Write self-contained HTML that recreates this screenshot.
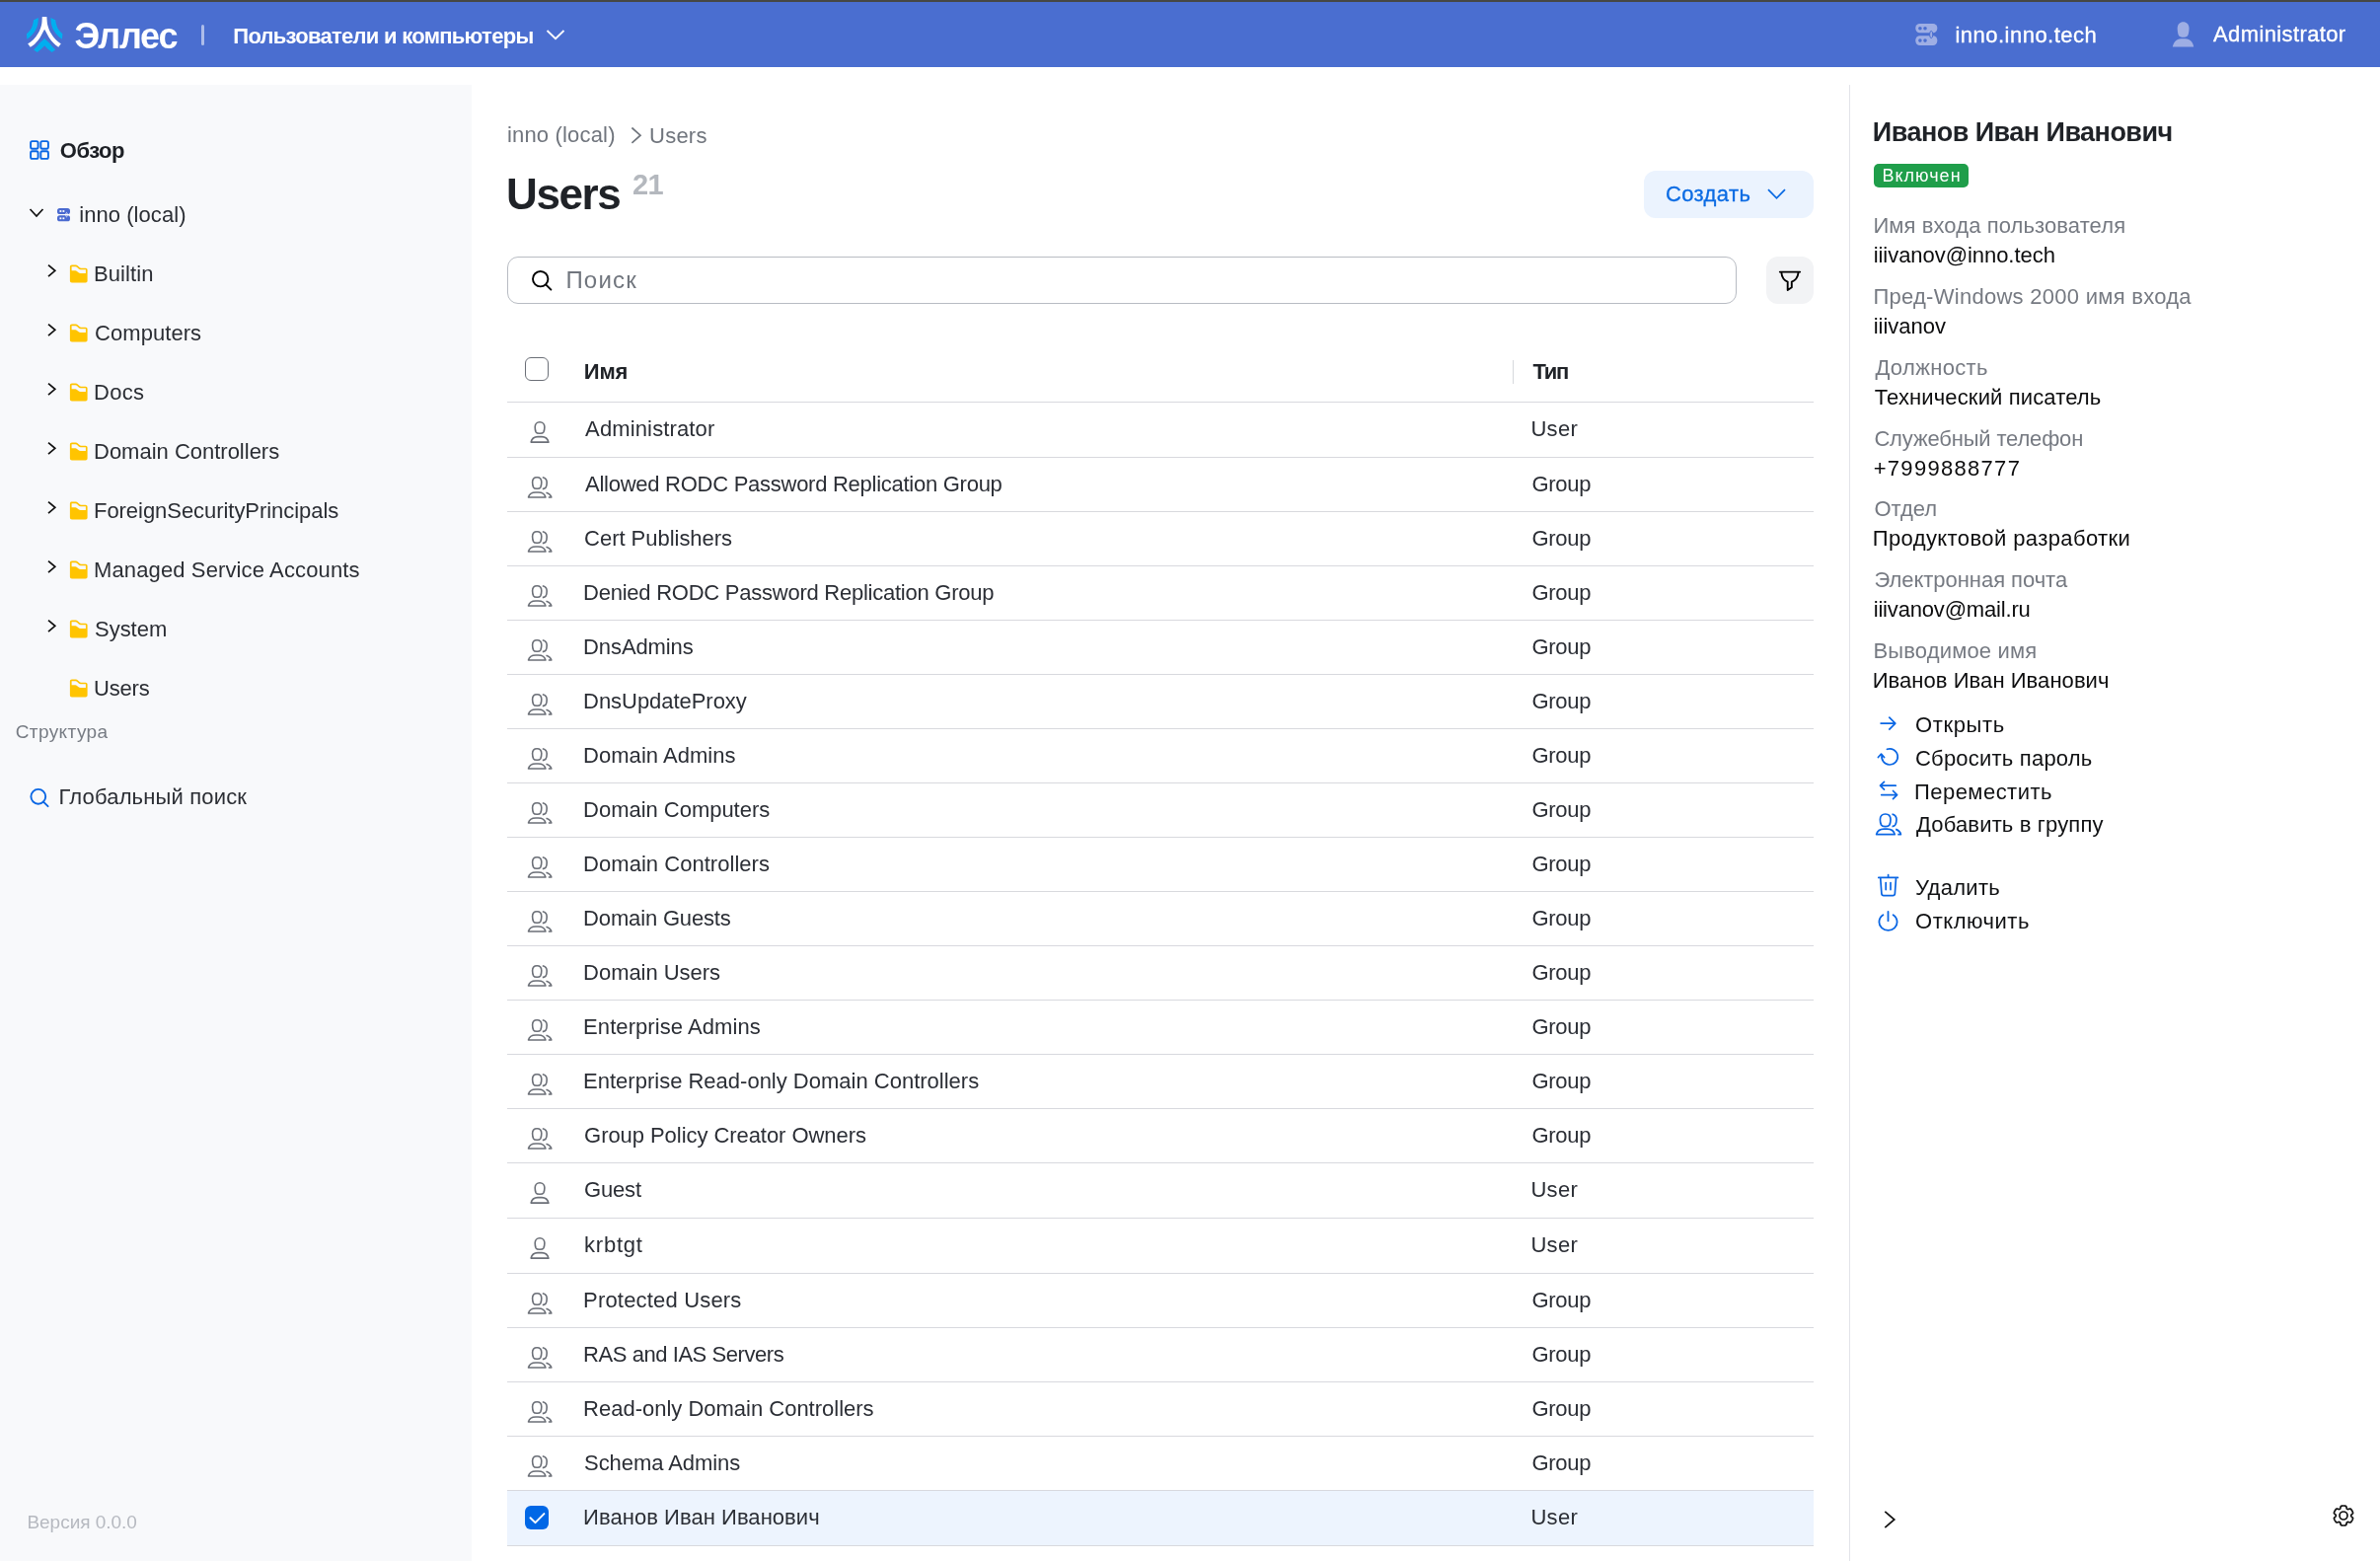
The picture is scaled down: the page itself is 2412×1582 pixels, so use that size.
<!DOCTYPE html>
<html><head><meta charset="utf-8"><style>
html,body{margin:0;padding:0;}
body{width:2412px;height:1582px;overflow:hidden;position:relative;background:#fff;font-family:"Liberation Sans", sans-serif;}
.t{position:absolute;white-space:pre;font-family:"Liberation Sans", sans-serif;}
svg{overflow:visible}
#w{position:absolute;left:0;top:0;width:2412px;height:1582px;will-change:transform;}
</style></head><body><div id="w">
<div style="position:absolute;left:0px;top:0px;width:2412px;height:2px;background:#464744"></div>
<div style="position:absolute;left:0px;top:2px;width:2412px;height:66px;background:#4a6ed0"></div>
<svg style="position:absolute;left:20px;top:10px" width="55" height="50" viewBox="0 0 55 50" fill="none">
<path d="M22.74 6.89 L27.39 6.89 C27.6 10 27.7 13 28.3 15.5 C29 18.5 30.5 22 32.03 24.34 C33.5 26.8 35 28.6 35.87 29.6 C37.5 31.5 39.5 33 41.8 34.27 L39.24 37.8 C37.2 36.5 35.5 35.2 34.1 33.6 C32.5 31.8 31 30 29.79 28.19 C28.3 25.8 27 23 25.14 19.86 C23.3 23 22 25.8 20.5 28.19 C19.3 30 17.8 31.8 16.2 33.6 C14.8 35.2 13.1 36.5 10.73 37.8 L8.17 34.27 C10.7 33 12.8 31.5 14.4 29.6 C15.3 28.6 16.8 26.8 18.25 24.34 C19.8 22 21.3 18.5 22 15.5 C22.6 13 22.6 10 22.74 6.89 Z" fill="#fff"/>
<path d="M14.09 10.25 L18.9 8.01 C18.8 10.5 18.7 12 18.42 13.45 C18 15.8 17.5 17.5 16.66 19.22 C15.6 21.4 14.4 23.3 12.81 24.98 C11.3 26.6 9.5 28.3 7.37 29.79 L6.89 24.34 C8.3 23.2 9.5 22 10.57 20.5 C11.6 19.2 12.3 17.7 12.81 16.02 C13.4 14.2 13.8 12.4 14.09 10.25 Z" fill="#00aeef"/>
<path d="M36.21 10.25 L31.4 8.01 C31.5 10.5 31.6 12 31.88 13.45 C32.3 15.8 32.8 17.5 33.64 19.22 C34.7 21.4 35.9 23.3 37.49 24.98 C39 26.6 40.8 28.3 42.93 29.79 L43.41 24.34 C42 23.2 40.8 22 39.73 20.5 C38.7 19.2 38 17.7 37.49 16.02 C36.9 14.2 36.5 12.4 36.21 10.25 Z" fill="#00aeef"/>
<path d="M25.14 28.83 C23.8 30.6 22.5 31.9 20.82 32.99 C18.8 35.4 16.6 38 14.09 40.52 L17.78 42.92 C19.2 41.8 20.5 40.8 21.78 39.72 C23 38.6 24.1 37.4 25.14 36.19 C26.2 37.4 27.3 38.6 28.51 39.72 C29.8 40.8 31.1 41.8 32.51 42.92 L36.19 40.52 C33.7 38 31.5 35.4 29.47 32.99 C27.8 31.9 26.5 30.6 25.14 28.83 Z" fill="#00aeef"/>
</svg>
<div class="t" style="left:75.60px;top:19px;font-size:36px;line-height:36px;color:#fff;font-weight:700;letter-spacing:-1.150px;">Эллес</div>
<div style="position:absolute;left:204px;top:24.5px;width:3px;height:21px;background:rgba(255,255,255,0.55);border-radius:1.5px"></div>
<div class="t" style="left:236.30px;top:26px;font-size:22px;line-height:22px;color:#fff;font-weight:700;letter-spacing:-0.721px;">Пользователи и компьютеры</div>
<svg style="position:absolute;left:552px;top:28px" width="22" height="14" viewBox="0 0 22 14" fill="none"><path d="M2.5 3 L11 11.2 L19.5 3" stroke="#fff" stroke-width="1.8" fill="none"/></svg>
<svg style="position:absolute;left:1940px;top:22px" width="26" height="26" viewBox="0 0 26 26" fill="none"><rect x="1.3" y="1.9" width="22" height="9.4" rx="4.2" fill="#9eaee4"/>
<rect x="1.3" y="14.3" width="22" height="9.6" rx="4.3" fill="#9eaee4"/>
<circle cx="5.9" cy="6.7" r="1.8" fill="#4a6ed0"/><circle cx="11" cy="6.7" r="1.8" fill="#4a6ed0"/>
<circle cx="5.9" cy="19.1" r="1.8" fill="#4a6ed0"/><circle cx="11" cy="19.1" r="1.8" fill="#4a6ed0"/>
<ellipse cx="17.2" cy="13" rx="1.6" ry="3.6" fill="#9eaee4" stroke="#4a6ed0" stroke-width="1"/></svg>
<div class="t" style="left:1981.40px;top:25px;font-size:22px;line-height:22px;color:#fff;letter-spacing:0.492px;-webkit-text-stroke:0.35px #fff;">inno.inno.tech</div>
<svg style="position:absolute;left:2200px;top:20px" width="26" height="30" viewBox="0 0 26 30" fill="none"><path d="M12.6 2.2 C16 2.2 18.5 4.5 18.5 8.5 C18.5 11 18.1 14 17.3 15.8 C16.5 17.4 14.8 17.8 12.6 17.8 C10.4 17.8 8.7 17.4 7.9 15.8 C7.1 14 6.7 11 6.7 8.5 C6.7 4.5 9.2 2.2 12.6 2.2 Z" fill="#9eaee4"/>
<path d="M1.8 27.6 C2.6 23 5.5 19.2 10.5 19.2 L14.7 19.2 C19.7 19.2 22.6 23 23.2 27.6 Z" fill="#9eaee4"/></svg>
<div class="t" style="left:2243.00px;top:24px;font-size:22px;line-height:22px;color:#fff;letter-spacing:0.383px;-webkit-text-stroke:0.35px #fff;">Administrator</div>
<div style="position:absolute;left:0px;top:86px;width:478px;height:1496px;background:#f8f9fb"></div>
<svg style="position:absolute;left:28px;top:140px" width="24" height="24" viewBox="0 0 24 24" fill="none"><g stroke="#0a66e4" stroke-width="1.9" fill="none">
<rect x="3.1" y="3.1" width="7.5" height="7.6" rx="1.6"/><rect x="13.3" y="3.1" width="7.6" height="7.6" rx="1.6"/>
<rect x="3.1" y="13.3" width="7.5" height="7.6" rx="1.6"/><rect x="13.3" y="13.3" width="7.6" height="7.6" rx="1.6"/></g></svg>
<div class="t" style="left:60.80px;top:142px;font-size:22px;line-height:22px;color:#1d2025;font-weight:700;letter-spacing:-0.525px;">Обзор</div>
<svg style="position:absolute;left:28px;top:208px" width="18" height="16" viewBox="0 0 18 16" fill="none"><path d="M2.5 4 L9 11 L15.5 4" stroke="#111" stroke-width="1.7" fill="none"/></svg>
<svg style="position:absolute;left:56px;top:209px" width="18" height="18" viewBox="0 0 18 18" fill="none"><rect x="2" y="2" width="13" height="6" rx="2.6" fill="#4a6ad0"/><rect x="2" y="9.3" width="13" height="6" rx="2.6" fill="#4a6ad0"/>
<rect x="4.5" y="4.1" width="1.8" height="1.8" fill="#fff"/><rect x="7.5" y="4.1" width="1.8" height="1.8" fill="#fff"/>
<rect x="4.5" y="11.4" width="1.8" height="1.8" fill="#fff"/><rect x="7.5" y="11.4" width="1.8" height="1.8" fill="#fff"/>
<ellipse cx="11.5" cy="8.6" rx="0.8" ry="2.2" fill="none" stroke="#fff" stroke-width="0.7"/></svg>
<div class="t" style="left:80.20px;top:207px;font-size:22px;line-height:22px;color:#2b2e34;letter-spacing:0.064px;">inno (local)</div>
<svg style="position:absolute;left:46px;top:266px" width="14" height="18" viewBox="0 0 14 18" fill="none"><path d="M3 2.6 L9.8 8.3 L3 14.2" stroke="#111" stroke-width="1.7" fill="none"/></svg>
<svg style="position:absolute;left:70px;top:268px" width="20" height="19" viewBox="0 0 20 19" fill="none"><path d="M0.9 2.6 C0.9 1.3 1.6 0.6 2.9 0.6 L6.8 0.6 C7.7 0.6 8.3 0.9 8.9 1.5 L10.6 3.1 C11 3.5 11.5 3.7 12.2 3.7 L16.6 3.7 C17.9 3.7 18.6 4.4 18.6 5.7 L18.6 16.4 C18.6 17.7 17.9 18.4 16.6 18.4 L2.9 18.4 C1.6 18.4 0.9 17.7 0.9 16.4 Z" fill="#ffc400"/>
<path d="M2.6 2.3 L6.6 2.3 C7.3 2.3 7.7 2.5 8.2 3 L9.8 4.5 C10.3 5 10.9 5.3 11.8 5.3 L16.9 5.3 L16.9 9.1 L11.6 9.1 C10.8 9.1 10.2 8.8 9.6 8.3 L8 6.9 C7.5 6.4 7 6.2 6.3 6.2 L2.6 6.2 Z" fill="#f8f9fb"/></svg>
<div class="t" style="left:95.00px;top:267px;font-size:22px;line-height:22px;color:#2b2e34;letter-spacing:0.100px;">Builtin</div>
<svg style="position:absolute;left:46px;top:326px" width="14" height="18" viewBox="0 0 14 18" fill="none"><path d="M3 2.6 L9.8 8.3 L3 14.2" stroke="#111" stroke-width="1.7" fill="none"/></svg>
<svg style="position:absolute;left:70px;top:328px" width="20" height="19" viewBox="0 0 20 19" fill="none"><path d="M0.9 2.6 C0.9 1.3 1.6 0.6 2.9 0.6 L6.8 0.6 C7.7 0.6 8.3 0.9 8.9 1.5 L10.6 3.1 C11 3.5 11.5 3.7 12.2 3.7 L16.6 3.7 C17.9 3.7 18.6 4.4 18.6 5.7 L18.6 16.4 C18.6 17.7 17.9 18.4 16.6 18.4 L2.9 18.4 C1.6 18.4 0.9 17.7 0.9 16.4 Z" fill="#ffc400"/>
<path d="M2.6 2.3 L6.6 2.3 C7.3 2.3 7.7 2.5 8.2 3 L9.8 4.5 C10.3 5 10.9 5.3 11.8 5.3 L16.9 5.3 L16.9 9.1 L11.6 9.1 C10.8 9.1 10.2 8.8 9.6 8.3 L8 6.9 C7.5 6.4 7 6.2 6.3 6.2 L2.6 6.2 Z" fill="#f8f9fb"/></svg>
<div class="t" style="left:96.00px;top:327px;font-size:22px;line-height:22px;color:#2b2e34;letter-spacing:0.062px;">Computers</div>
<svg style="position:absolute;left:46px;top:386px" width="14" height="18" viewBox="0 0 14 18" fill="none"><path d="M3 2.6 L9.8 8.3 L3 14.2" stroke="#111" stroke-width="1.7" fill="none"/></svg>
<svg style="position:absolute;left:70px;top:388px" width="20" height="19" viewBox="0 0 20 19" fill="none"><path d="M0.9 2.6 C0.9 1.3 1.6 0.6 2.9 0.6 L6.8 0.6 C7.7 0.6 8.3 0.9 8.9 1.5 L10.6 3.1 C11 3.5 11.5 3.7 12.2 3.7 L16.6 3.7 C17.9 3.7 18.6 4.4 18.6 5.7 L18.6 16.4 C18.6 17.7 17.9 18.4 16.6 18.4 L2.9 18.4 C1.6 18.4 0.9 17.7 0.9 16.4 Z" fill="#ffc400"/>
<path d="M2.6 2.3 L6.6 2.3 C7.3 2.3 7.7 2.5 8.2 3 L9.8 4.5 C10.3 5 10.9 5.3 11.8 5.3 L16.9 5.3 L16.9 9.1 L11.6 9.1 C10.8 9.1 10.2 8.8 9.6 8.3 L8 6.9 C7.5 6.4 7 6.2 6.3 6.2 L2.6 6.2 Z" fill="#f8f9fb"/></svg>
<div class="t" style="left:95.00px;top:387px;font-size:22px;line-height:22px;color:#2b2e34;letter-spacing:0.300px;">Docs</div>
<svg style="position:absolute;left:46px;top:446px" width="14" height="18" viewBox="0 0 14 18" fill="none"><path d="M3 2.6 L9.8 8.3 L3 14.2" stroke="#111" stroke-width="1.7" fill="none"/></svg>
<svg style="position:absolute;left:70px;top:448px" width="20" height="19" viewBox="0 0 20 19" fill="none"><path d="M0.9 2.6 C0.9 1.3 1.6 0.6 2.9 0.6 L6.8 0.6 C7.7 0.6 8.3 0.9 8.9 1.5 L10.6 3.1 C11 3.5 11.5 3.7 12.2 3.7 L16.6 3.7 C17.9 3.7 18.6 4.4 18.6 5.7 L18.6 16.4 C18.6 17.7 17.9 18.4 16.6 18.4 L2.9 18.4 C1.6 18.4 0.9 17.7 0.9 16.4 Z" fill="#ffc400"/>
<path d="M2.6 2.3 L6.6 2.3 C7.3 2.3 7.7 2.5 8.2 3 L9.8 4.5 C10.3 5 10.9 5.3 11.8 5.3 L16.9 5.3 L16.9 9.1 L11.6 9.1 C10.8 9.1 10.2 8.8 9.6 8.3 L8 6.9 C7.5 6.4 7 6.2 6.3 6.2 L2.6 6.2 Z" fill="#f8f9fb"/></svg>
<div class="t" style="left:95.00px;top:447px;font-size:22px;line-height:22px;color:#2b2e34;letter-spacing:-0.006px;">Domain Controllers</div>
<svg style="position:absolute;left:46px;top:506px" width="14" height="18" viewBox="0 0 14 18" fill="none"><path d="M3 2.6 L9.8 8.3 L3 14.2" stroke="#111" stroke-width="1.7" fill="none"/></svg>
<svg style="position:absolute;left:70px;top:508px" width="20" height="19" viewBox="0 0 20 19" fill="none"><path d="M0.9 2.6 C0.9 1.3 1.6 0.6 2.9 0.6 L6.8 0.6 C7.7 0.6 8.3 0.9 8.9 1.5 L10.6 3.1 C11 3.5 11.5 3.7 12.2 3.7 L16.6 3.7 C17.9 3.7 18.6 4.4 18.6 5.7 L18.6 16.4 C18.6 17.7 17.9 18.4 16.6 18.4 L2.9 18.4 C1.6 18.4 0.9 17.7 0.9 16.4 Z" fill="#ffc400"/>
<path d="M2.6 2.3 L6.6 2.3 C7.3 2.3 7.7 2.5 8.2 3 L9.8 4.5 C10.3 5 10.9 5.3 11.8 5.3 L16.9 5.3 L16.9 9.1 L11.6 9.1 C10.8 9.1 10.2 8.8 9.6 8.3 L8 6.9 C7.5 6.4 7 6.2 6.3 6.2 L2.6 6.2 Z" fill="#f8f9fb"/></svg>
<div class="t" style="left:95.00px;top:507px;font-size:22px;line-height:22px;color:#2b2e34;letter-spacing:-0.046px;">ForeignSecurityPrincipals</div>
<svg style="position:absolute;left:46px;top:566px" width="14" height="18" viewBox="0 0 14 18" fill="none"><path d="M3 2.6 L9.8 8.3 L3 14.2" stroke="#111" stroke-width="1.7" fill="none"/></svg>
<svg style="position:absolute;left:70px;top:568px" width="20" height="19" viewBox="0 0 20 19" fill="none"><path d="M0.9 2.6 C0.9 1.3 1.6 0.6 2.9 0.6 L6.8 0.6 C7.7 0.6 8.3 0.9 8.9 1.5 L10.6 3.1 C11 3.5 11.5 3.7 12.2 3.7 L16.6 3.7 C17.9 3.7 18.6 4.4 18.6 5.7 L18.6 16.4 C18.6 17.7 17.9 18.4 16.6 18.4 L2.9 18.4 C1.6 18.4 0.9 17.7 0.9 16.4 Z" fill="#ffc400"/>
<path d="M2.6 2.3 L6.6 2.3 C7.3 2.3 7.7 2.5 8.2 3 L9.8 4.5 C10.3 5 10.9 5.3 11.8 5.3 L16.9 5.3 L16.9 9.1 L11.6 9.1 C10.8 9.1 10.2 8.8 9.6 8.3 L8 6.9 C7.5 6.4 7 6.2 6.3 6.2 L2.6 6.2 Z" fill="#f8f9fb"/></svg>
<div class="t" style="left:95.00px;top:567px;font-size:22px;line-height:22px;color:#2b2e34;letter-spacing:0.126px;">Managed Service Accounts</div>
<svg style="position:absolute;left:46px;top:626px" width="14" height="18" viewBox="0 0 14 18" fill="none"><path d="M3 2.6 L9.8 8.3 L3 14.2" stroke="#111" stroke-width="1.7" fill="none"/></svg>
<svg style="position:absolute;left:70px;top:628px" width="20" height="19" viewBox="0 0 20 19" fill="none"><path d="M0.9 2.6 C0.9 1.3 1.6 0.6 2.9 0.6 L6.8 0.6 C7.7 0.6 8.3 0.9 8.9 1.5 L10.6 3.1 C11 3.5 11.5 3.7 12.2 3.7 L16.6 3.7 C17.9 3.7 18.6 4.4 18.6 5.7 L18.6 16.4 C18.6 17.7 17.9 18.4 16.6 18.4 L2.9 18.4 C1.6 18.4 0.9 17.7 0.9 16.4 Z" fill="#ffc400"/>
<path d="M2.6 2.3 L6.6 2.3 C7.3 2.3 7.7 2.5 8.2 3 L9.8 4.5 C10.3 5 10.9 5.3 11.8 5.3 L16.9 5.3 L16.9 9.1 L11.6 9.1 C10.8 9.1 10.2 8.8 9.6 8.3 L8 6.9 C7.5 6.4 7 6.2 6.3 6.2 L2.6 6.2 Z" fill="#f8f9fb"/></svg>
<div class="t" style="left:96.00px;top:627px;font-size:22px;line-height:22px;color:#2b2e34;letter-spacing:-0.020px;">System</div>
<svg style="position:absolute;left:70px;top:688px" width="20" height="19" viewBox="0 0 20 19" fill="none"><path d="M0.9 2.6 C0.9 1.3 1.6 0.6 2.9 0.6 L6.8 0.6 C7.7 0.6 8.3 0.9 8.9 1.5 L10.6 3.1 C11 3.5 11.5 3.7 12.2 3.7 L16.6 3.7 C17.9 3.7 18.6 4.4 18.6 5.7 L18.6 16.4 C18.6 17.7 17.9 18.4 16.6 18.4 L2.9 18.4 C1.6 18.4 0.9 17.7 0.9 16.4 Z" fill="#ffc400"/>
<path d="M2.6 2.3 L6.6 2.3 C7.3 2.3 7.7 2.5 8.2 3 L9.8 4.5 C10.3 5 10.9 5.3 11.8 5.3 L16.9 5.3 L16.9 9.1 L11.6 9.1 C10.8 9.1 10.2 8.8 9.6 8.3 L8 6.9 C7.5 6.4 7 6.2 6.3 6.2 L2.6 6.2 Z" fill="#f8f9fb"/></svg>
<div class="t" style="left:95.00px;top:687px;font-size:22px;line-height:22px;color:#2b2e34;letter-spacing:-0.200px;">Users</div>
<div class="t" style="left:15.70px;top:732px;font-size:19px;line-height:19px;color:#777c84;letter-spacing:0.412px;">Структура</div>
<svg style="position:absolute;left:28px;top:797px" width="24" height="24" viewBox="0 0 24 24" fill="none"><circle cx="10.8" cy="10.3" r="7.4" stroke="#0a66e4" stroke-width="1.9"/><path d="M16 15.6 L20.6 20.2" stroke="#0a66e4" stroke-width="1.9" stroke-linecap="round"/></svg>
<div class="t" style="left:59.50px;top:797px;font-size:22px;line-height:22px;color:#2b2e34;letter-spacing:0.160px;">Глобальный поиск</div>
<div class="t" style="left:27.40px;top:1533px;font-size:19px;line-height:19px;color:#b6b9c0;letter-spacing:-0.018px;">Версия 0.0.0</div>
<div class="t" style="left:513.90px;top:126px;font-size:22px;line-height:22px;color:#70757d;letter-spacing:0.182px;">inno (local)</div>
<svg style="position:absolute;left:636px;top:127px" width="18" height="20" viewBox="0 0 18 20" fill="none"><path d="M4.4 2.5 L13 10.2 L4.4 17.8" stroke="#70757d" stroke-width="1.7" fill="none"/></svg>
<div class="t" style="left:658.00px;top:127px;font-size:22px;line-height:22px;color:#70757d;letter-spacing:0.250px;">Users</div>
<div class="t" style="left:513.00px;top:175px;font-size:44px;line-height:44px;color:#1f2227;font-weight:700;letter-spacing:-1.375px;">Users</div>
<div class="t" style="left:641.00px;top:173px;font-size:29px;line-height:29px;color:#b4b8be;font-weight:700;letter-spacing:-0.600px;">21</div>
<div style="position:absolute;left:1666px;top:173px;width:172px;height:48px;background:#ebf3fe;border-radius:12px"></div>
<div class="t" style="left:1687.90px;top:186px;font-size:22px;line-height:22px;color:#0b6be3;letter-spacing:0.400px;-webkit-text-stroke:0.3px #0b6be3;">Создать</div>
<svg style="position:absolute;left:1788px;top:188px" width="24" height="18" viewBox="0 0 24 18" fill="none"><path d="M4 4.2 L12.5 12.8 L21 4.2" stroke="#0b6be3" stroke-width="1.8" fill="none"/></svg>
<div style="position:absolute;left:514px;top:260px;width:1246px;height:48px;box-sizing:border-box;border:1.5px solid #b8bcc3;border-radius:11px;background:#fff"></div>
<svg style="position:absolute;left:534px;top:270px" width="28" height="28" viewBox="0 0 28 28" fill="none"><circle cx="13.7" cy="12.7" r="7.7" stroke="#000" stroke-width="1.9"/><path d="M19.6 18.8 L24.4 23.6" stroke="#000" stroke-width="1.9" stroke-linecap="round"/></svg>
<div class="t" style="left:573.40px;top:272px;font-size:24px;line-height:24px;color:#71767e;letter-spacing:1.225px;">Поиск</div>
<div style="position:absolute;left:1790px;top:260px;width:48px;height:48px;background:#f2f3f5;border-radius:12px"></div>
<svg style="position:absolute;left:1800px;top:270px" width="28" height="28" viewBox="0 0 28 28" fill="none"><path d="M3.8 5.6 L24.2 5.6 M5.3 6 C5.8 11 8.3 14.3 11.7 15.6 L11.7 24 L15.8 21.2 L15.8 15.6 C19.4 14.3 22 11 22.6 6" stroke="#000" stroke-width="1.9" fill="none" stroke-linejoin="round" stroke-linecap="round"/></svg>
<div style="position:absolute;left:532px;top:362px;width:24px;height:24px;box-sizing:border-box;border:1.6px solid #6b6f77;border-radius:6px;background:#fff"></div>
<div class="t" style="left:591.80px;top:366px;font-size:22px;line-height:22px;color:#1f2227;font-weight:700;letter-spacing:-0.150px;">Имя</div>
<div style="position:absolute;left:1533px;top:365px;width:1px;height:24px;background:#d6d8dd"></div>
<div class="t" style="left:1553.40px;top:366px;font-size:22px;line-height:22px;color:#1f2227;font-weight:700;letter-spacing:-1.200px;">Тип</div>
<div style="position:absolute;left:514px;top:407px;width:1324px;height:1px;background:#d8d9de"></div>
<svg style="position:absolute;left:533px;top:424px" width="28" height="28" viewBox="0 0 28 28" fill="none"><g stroke="#6b6f77" stroke-width="1.6" fill="none" stroke-linejoin="round">
<path d="M14 3.7 C17 3.7 18.9 6 18.9 8.8 C18.9 10.6 18.5 12.5 17.9 13.8 C17.3 15 16 15.2 14 15.2 C12 15.2 10.7 15 10.1 13.8 C9.5 12.5 9.2 10.6 9.2 8.8 C9.2 6 11 3.7 14 3.7 Z"/>
<path d="M5.1 24.1 C5.8 21 8 18.6 12 18.6 L16 18.6 C20 18.6 22.2 21 22.9 24.1 Z"/></g></svg>
<div class="t" style="left:593.10px;top:424px;font-size:22px;line-height:22px;color:#2b2e35;letter-spacing:0.133px;">Administrator</div>
<div class="t" style="left:1551.40px;top:424px;font-size:22px;line-height:22px;color:#2b2e35;letter-spacing:0.300px;">User</div>
<div style="position:absolute;left:514px;top:463px;width:1324px;height:1px;background:#d8d9de"></div>
<svg style="position:absolute;left:533px;top:480px" width="28" height="28" viewBox="0 0 28 28" fill="none"><g stroke="#6b6f77" stroke-width="1.6" fill="none" stroke-linejoin="round">
<path d="M11.2 3.7 C14.2 3.7 15.8 6 15.8 8.8 C15.8 10.6 15.4 12.5 14.8 13.8 C14.2 15 13 15.2 11.2 15.2 C9.4 15.2 8.2 15 7.6 13.8 C7 12.5 6.6 10.6 6.6 8.8 C6.6 6 8.2 3.7 11.2 3.7 Z"/>
<path d="M16.8 3.8 C19.6 4.3 21.2 6.4 21.2 9 C21.2 11 20.8 12.8 20.2 14 C19.5 15 18.3 15.4 16.8 15.6"/>
<path d="M2.5 24 C3.2 21 5.5 19 10 19 L12.5 19 C17 19 19.2 21 19.9 24 Z"/>
<path d="M20.5 19.2 C23.5 20.3 25.4 22 25.8 24 L22.8 24"/></g></svg>
<div class="t" style="left:593.10px;top:480px;font-size:22px;line-height:22px;color:#2b2e35;letter-spacing:-0.266px;">Allowed RODC Password Replication Group</div>
<div class="t" style="left:1552.40px;top:480px;font-size:22px;line-height:22px;color:#2b2e35;letter-spacing:-0.275px;">Group</div>
<div style="position:absolute;left:514px;top:518px;width:1324px;height:1px;background:#d8d9de"></div>
<svg style="position:absolute;left:533px;top:535px" width="28" height="28" viewBox="0 0 28 28" fill="none"><g stroke="#6b6f77" stroke-width="1.6" fill="none" stroke-linejoin="round">
<path d="M11.2 3.7 C14.2 3.7 15.8 6 15.8 8.8 C15.8 10.6 15.4 12.5 14.8 13.8 C14.2 15 13 15.2 11.2 15.2 C9.4 15.2 8.2 15 7.6 13.8 C7 12.5 6.6 10.6 6.6 8.8 C6.6 6 8.2 3.7 11.2 3.7 Z"/>
<path d="M16.8 3.8 C19.6 4.3 21.2 6.4 21.2 9 C21.2 11 20.8 12.8 20.2 14 C19.5 15 18.3 15.4 16.8 15.6"/>
<path d="M2.5 24 C3.2 21 5.5 19 10 19 L12.5 19 C17 19 19.2 21 19.9 24 Z"/>
<path d="M20.5 19.2 C23.5 20.3 25.4 22 25.8 24 L22.8 24"/></g></svg>
<div class="t" style="left:592.10px;top:535px;font-size:22px;line-height:22px;color:#2b2e35;letter-spacing:-0.029px;">Cert Publishers</div>
<div class="t" style="left:1552.40px;top:535px;font-size:22px;line-height:22px;color:#2b2e35;letter-spacing:-0.275px;">Group</div>
<div style="position:absolute;left:514px;top:573px;width:1324px;height:1px;background:#d8d9de"></div>
<svg style="position:absolute;left:533px;top:590px" width="28" height="28" viewBox="0 0 28 28" fill="none"><g stroke="#6b6f77" stroke-width="1.6" fill="none" stroke-linejoin="round">
<path d="M11.2 3.7 C14.2 3.7 15.8 6 15.8 8.8 C15.8 10.6 15.4 12.5 14.8 13.8 C14.2 15 13 15.2 11.2 15.2 C9.4 15.2 8.2 15 7.6 13.8 C7 12.5 6.6 10.6 6.6 8.8 C6.6 6 8.2 3.7 11.2 3.7 Z"/>
<path d="M16.8 3.8 C19.6 4.3 21.2 6.4 21.2 9 C21.2 11 20.8 12.8 20.2 14 C19.5 15 18.3 15.4 16.8 15.6"/>
<path d="M2.5 24 C3.2 21 5.5 19 10 19 L12.5 19 C17 19 19.2 21 19.9 24 Z"/>
<path d="M20.5 19.2 C23.5 20.3 25.4 22 25.8 24 L22.8 24"/></g></svg>
<div class="t" style="left:591.10px;top:590px;font-size:22px;line-height:22px;color:#2b2e35;letter-spacing:-0.246px;">Denied RODC Password Replication Group</div>
<div class="t" style="left:1552.40px;top:590px;font-size:22px;line-height:22px;color:#2b2e35;letter-spacing:-0.275px;">Group</div>
<div style="position:absolute;left:514px;top:628px;width:1324px;height:1px;background:#d8d9de"></div>
<svg style="position:absolute;left:533px;top:645px" width="28" height="28" viewBox="0 0 28 28" fill="none"><g stroke="#6b6f77" stroke-width="1.6" fill="none" stroke-linejoin="round">
<path d="M11.2 3.7 C14.2 3.7 15.8 6 15.8 8.8 C15.8 10.6 15.4 12.5 14.8 13.8 C14.2 15 13 15.2 11.2 15.2 C9.4 15.2 8.2 15 7.6 13.8 C7 12.5 6.6 10.6 6.6 8.8 C6.6 6 8.2 3.7 11.2 3.7 Z"/>
<path d="M16.8 3.8 C19.6 4.3 21.2 6.4 21.2 9 C21.2 11 20.8 12.8 20.2 14 C19.5 15 18.3 15.4 16.8 15.6"/>
<path d="M2.5 24 C3.2 21 5.5 19 10 19 L12.5 19 C17 19 19.2 21 19.9 24 Z"/>
<path d="M20.5 19.2 C23.5 20.3 25.4 22 25.8 24 L22.8 24"/></g></svg>
<div class="t" style="left:591.10px;top:645px;font-size:22px;line-height:22px;color:#2b2e35;letter-spacing:-0.112px;">DnsAdmins</div>
<div class="t" style="left:1552.40px;top:645px;font-size:22px;line-height:22px;color:#2b2e35;letter-spacing:-0.275px;">Group</div>
<div style="position:absolute;left:514px;top:683px;width:1324px;height:1px;background:#d8d9de"></div>
<svg style="position:absolute;left:533px;top:700px" width="28" height="28" viewBox="0 0 28 28" fill="none"><g stroke="#6b6f77" stroke-width="1.6" fill="none" stroke-linejoin="round">
<path d="M11.2 3.7 C14.2 3.7 15.8 6 15.8 8.8 C15.8 10.6 15.4 12.5 14.8 13.8 C14.2 15 13 15.2 11.2 15.2 C9.4 15.2 8.2 15 7.6 13.8 C7 12.5 6.6 10.6 6.6 8.8 C6.6 6 8.2 3.7 11.2 3.7 Z"/>
<path d="M16.8 3.8 C19.6 4.3 21.2 6.4 21.2 9 C21.2 11 20.8 12.8 20.2 14 C19.5 15 18.3 15.4 16.8 15.6"/>
<path d="M2.5 24 C3.2 21 5.5 19 10 19 L12.5 19 C17 19 19.2 21 19.9 24 Z"/>
<path d="M20.5 19.2 C23.5 20.3 25.4 22 25.8 24 L22.8 24"/></g></svg>
<div class="t" style="left:591.10px;top:700px;font-size:22px;line-height:22px;color:#2b2e35;letter-spacing:-0.046px;">DnsUpdateProxy</div>
<div class="t" style="left:1552.40px;top:700px;font-size:22px;line-height:22px;color:#2b2e35;letter-spacing:-0.275px;">Group</div>
<div style="position:absolute;left:514px;top:738px;width:1324px;height:1px;background:#d8d9de"></div>
<svg style="position:absolute;left:533px;top:755px" width="28" height="28" viewBox="0 0 28 28" fill="none"><g stroke="#6b6f77" stroke-width="1.6" fill="none" stroke-linejoin="round">
<path d="M11.2 3.7 C14.2 3.7 15.8 6 15.8 8.8 C15.8 10.6 15.4 12.5 14.8 13.8 C14.2 15 13 15.2 11.2 15.2 C9.4 15.2 8.2 15 7.6 13.8 C7 12.5 6.6 10.6 6.6 8.8 C6.6 6 8.2 3.7 11.2 3.7 Z"/>
<path d="M16.8 3.8 C19.6 4.3 21.2 6.4 21.2 9 C21.2 11 20.8 12.8 20.2 14 C19.5 15 18.3 15.4 16.8 15.6"/>
<path d="M2.5 24 C3.2 21 5.5 19 10 19 L12.5 19 C17 19 19.2 21 19.9 24 Z"/>
<path d="M20.5 19.2 C23.5 20.3 25.4 22 25.8 24 L22.8 24"/></g></svg>
<div class="t" style="left:591.10px;top:755px;font-size:22px;line-height:22px;color:#2b2e35;letter-spacing:0.025px;">Domain Admins</div>
<div class="t" style="left:1552.40px;top:755px;font-size:22px;line-height:22px;color:#2b2e35;letter-spacing:-0.275px;">Group</div>
<div style="position:absolute;left:514px;top:793px;width:1324px;height:1px;background:#d8d9de"></div>
<svg style="position:absolute;left:533px;top:810px" width="28" height="28" viewBox="0 0 28 28" fill="none"><g stroke="#6b6f77" stroke-width="1.6" fill="none" stroke-linejoin="round">
<path d="M11.2 3.7 C14.2 3.7 15.8 6 15.8 8.8 C15.8 10.6 15.4 12.5 14.8 13.8 C14.2 15 13 15.2 11.2 15.2 C9.4 15.2 8.2 15 7.6 13.8 C7 12.5 6.6 10.6 6.6 8.8 C6.6 6 8.2 3.7 11.2 3.7 Z"/>
<path d="M16.8 3.8 C19.6 4.3 21.2 6.4 21.2 9 C21.2 11 20.8 12.8 20.2 14 C19.5 15 18.3 15.4 16.8 15.6"/>
<path d="M2.5 24 C3.2 21 5.5 19 10 19 L12.5 19 C17 19 19.2 21 19.9 24 Z"/>
<path d="M20.5 19.2 C23.5 20.3 25.4 22 25.8 24 L22.8 24"/></g></svg>
<div class="t" style="left:591.10px;top:810px;font-size:22px;line-height:22px;color:#2b2e35;letter-spacing:-0.027px;">Domain Computers</div>
<div class="t" style="left:1552.40px;top:810px;font-size:22px;line-height:22px;color:#2b2e35;letter-spacing:-0.275px;">Group</div>
<div style="position:absolute;left:514px;top:848px;width:1324px;height:1px;background:#d8d9de"></div>
<svg style="position:absolute;left:533px;top:865px" width="28" height="28" viewBox="0 0 28 28" fill="none"><g stroke="#6b6f77" stroke-width="1.6" fill="none" stroke-linejoin="round">
<path d="M11.2 3.7 C14.2 3.7 15.8 6 15.8 8.8 C15.8 10.6 15.4 12.5 14.8 13.8 C14.2 15 13 15.2 11.2 15.2 C9.4 15.2 8.2 15 7.6 13.8 C7 12.5 6.6 10.6 6.6 8.8 C6.6 6 8.2 3.7 11.2 3.7 Z"/>
<path d="M16.8 3.8 C19.6 4.3 21.2 6.4 21.2 9 C21.2 11 20.8 12.8 20.2 14 C19.5 15 18.3 15.4 16.8 15.6"/>
<path d="M2.5 24 C3.2 21 5.5 19 10 19 L12.5 19 C17 19 19.2 21 19.9 24 Z"/>
<path d="M20.5 19.2 C23.5 20.3 25.4 22 25.8 24 L22.8 24"/></g></svg>
<div class="t" style="left:591.10px;top:865px;font-size:22px;line-height:22px;color:#2b2e35;letter-spacing:0.035px;">Domain Controllers</div>
<div class="t" style="left:1552.40px;top:865px;font-size:22px;line-height:22px;color:#2b2e35;letter-spacing:-0.275px;">Group</div>
<div style="position:absolute;left:514px;top:903px;width:1324px;height:1px;background:#d8d9de"></div>
<svg style="position:absolute;left:533px;top:920px" width="28" height="28" viewBox="0 0 28 28" fill="none"><g stroke="#6b6f77" stroke-width="1.6" fill="none" stroke-linejoin="round">
<path d="M11.2 3.7 C14.2 3.7 15.8 6 15.8 8.8 C15.8 10.6 15.4 12.5 14.8 13.8 C14.2 15 13 15.2 11.2 15.2 C9.4 15.2 8.2 15 7.6 13.8 C7 12.5 6.6 10.6 6.6 8.8 C6.6 6 8.2 3.7 11.2 3.7 Z"/>
<path d="M16.8 3.8 C19.6 4.3 21.2 6.4 21.2 9 C21.2 11 20.8 12.8 20.2 14 C19.5 15 18.3 15.4 16.8 15.6"/>
<path d="M2.5 24 C3.2 21 5.5 19 10 19 L12.5 19 C17 19 19.2 21 19.9 24 Z"/>
<path d="M20.5 19.2 C23.5 20.3 25.4 22 25.8 24 L22.8 24"/></g></svg>
<div class="t" style="left:591.10px;top:920px;font-size:22px;line-height:22px;color:#2b2e35;letter-spacing:-0.158px;">Domain Guests</div>
<div class="t" style="left:1552.40px;top:920px;font-size:22px;line-height:22px;color:#2b2e35;letter-spacing:-0.275px;">Group</div>
<div style="position:absolute;left:514px;top:958px;width:1324px;height:1px;background:#d8d9de"></div>
<svg style="position:absolute;left:533px;top:975px" width="28" height="28" viewBox="0 0 28 28" fill="none"><g stroke="#6b6f77" stroke-width="1.6" fill="none" stroke-linejoin="round">
<path d="M11.2 3.7 C14.2 3.7 15.8 6 15.8 8.8 C15.8 10.6 15.4 12.5 14.8 13.8 C14.2 15 13 15.2 11.2 15.2 C9.4 15.2 8.2 15 7.6 13.8 C7 12.5 6.6 10.6 6.6 8.8 C6.6 6 8.2 3.7 11.2 3.7 Z"/>
<path d="M16.8 3.8 C19.6 4.3 21.2 6.4 21.2 9 C21.2 11 20.8 12.8 20.2 14 C19.5 15 18.3 15.4 16.8 15.6"/>
<path d="M2.5 24 C3.2 21 5.5 19 10 19 L12.5 19 C17 19 19.2 21 19.9 24 Z"/>
<path d="M20.5 19.2 C23.5 20.3 25.4 22 25.8 24 L22.8 24"/></g></svg>
<div class="t" style="left:591.10px;top:975px;font-size:22px;line-height:22px;color:#2b2e35;letter-spacing:-0.045px;">Domain Users</div>
<div class="t" style="left:1552.40px;top:975px;font-size:22px;line-height:22px;color:#2b2e35;letter-spacing:-0.275px;">Group</div>
<div style="position:absolute;left:514px;top:1013px;width:1324px;height:1px;background:#d8d9de"></div>
<svg style="position:absolute;left:533px;top:1030px" width="28" height="28" viewBox="0 0 28 28" fill="none"><g stroke="#6b6f77" stroke-width="1.6" fill="none" stroke-linejoin="round">
<path d="M11.2 3.7 C14.2 3.7 15.8 6 15.8 8.8 C15.8 10.6 15.4 12.5 14.8 13.8 C14.2 15 13 15.2 11.2 15.2 C9.4 15.2 8.2 15 7.6 13.8 C7 12.5 6.6 10.6 6.6 8.8 C6.6 6 8.2 3.7 11.2 3.7 Z"/>
<path d="M16.8 3.8 C19.6 4.3 21.2 6.4 21.2 9 C21.2 11 20.8 12.8 20.2 14 C19.5 15 18.3 15.4 16.8 15.6"/>
<path d="M2.5 24 C3.2 21 5.5 19 10 19 L12.5 19 C17 19 19.2 21 19.9 24 Z"/>
<path d="M20.5 19.2 C23.5 20.3 25.4 22 25.8 24 L22.8 24"/></g></svg>
<div class="t" style="left:591.10px;top:1030px;font-size:22px;line-height:22px;color:#2b2e35;letter-spacing:0.069px;">Enterprise Admins</div>
<div class="t" style="left:1552.40px;top:1030px;font-size:22px;line-height:22px;color:#2b2e35;letter-spacing:-0.275px;">Group</div>
<div style="position:absolute;left:514px;top:1068px;width:1324px;height:1px;background:#d8d9de"></div>
<svg style="position:absolute;left:533px;top:1085px" width="28" height="28" viewBox="0 0 28 28" fill="none"><g stroke="#6b6f77" stroke-width="1.6" fill="none" stroke-linejoin="round">
<path d="M11.2 3.7 C14.2 3.7 15.8 6 15.8 8.8 C15.8 10.6 15.4 12.5 14.8 13.8 C14.2 15 13 15.2 11.2 15.2 C9.4 15.2 8.2 15 7.6 13.8 C7 12.5 6.6 10.6 6.6 8.8 C6.6 6 8.2 3.7 11.2 3.7 Z"/>
<path d="M16.8 3.8 C19.6 4.3 21.2 6.4 21.2 9 C21.2 11 20.8 12.8 20.2 14 C19.5 15 18.3 15.4 16.8 15.6"/>
<path d="M2.5 24 C3.2 21 5.5 19 10 19 L12.5 19 C17 19 19.2 21 19.9 24 Z"/>
<path d="M20.5 19.2 C23.5 20.3 25.4 22 25.8 24 L22.8 24"/></g></svg>
<div class="t" style="left:591.10px;top:1085px;font-size:22px;line-height:22px;color:#2b2e35;">Enterprise Read-only Domain Controllers</div>
<div class="t" style="left:1552.40px;top:1085px;font-size:22px;line-height:22px;color:#2b2e35;letter-spacing:-0.275px;">Group</div>
<div style="position:absolute;left:514px;top:1123px;width:1324px;height:1px;background:#d8d9de"></div>
<svg style="position:absolute;left:533px;top:1140px" width="28" height="28" viewBox="0 0 28 28" fill="none"><g stroke="#6b6f77" stroke-width="1.6" fill="none" stroke-linejoin="round">
<path d="M11.2 3.7 C14.2 3.7 15.8 6 15.8 8.8 C15.8 10.6 15.4 12.5 14.8 13.8 C14.2 15 13 15.2 11.2 15.2 C9.4 15.2 8.2 15 7.6 13.8 C7 12.5 6.6 10.6 6.6 8.8 C6.6 6 8.2 3.7 11.2 3.7 Z"/>
<path d="M16.8 3.8 C19.6 4.3 21.2 6.4 21.2 9 C21.2 11 20.8 12.8 20.2 14 C19.5 15 18.3 15.4 16.8 15.6"/>
<path d="M2.5 24 C3.2 21 5.5 19 10 19 L12.5 19 C17 19 19.2 21 19.9 24 Z"/>
<path d="M20.5 19.2 C23.5 20.3 25.4 22 25.8 24 L22.8 24"/></g></svg>
<div class="t" style="left:592.10px;top:1140px;font-size:22px;line-height:22px;color:#2b2e35;letter-spacing:-0.058px;">Group Policy Creator Owners</div>
<div class="t" style="left:1552.40px;top:1140px;font-size:22px;line-height:22px;color:#2b2e35;letter-spacing:-0.275px;">Group</div>
<div style="position:absolute;left:514px;top:1178px;width:1324px;height:1px;background:#d8d9de"></div>
<svg style="position:absolute;left:533px;top:1195px" width="28" height="28" viewBox="0 0 28 28" fill="none"><g stroke="#6b6f77" stroke-width="1.6" fill="none" stroke-linejoin="round">
<path d="M14 3.7 C17 3.7 18.9 6 18.9 8.8 C18.9 10.6 18.5 12.5 17.9 13.8 C17.3 15 16 15.2 14 15.2 C12 15.2 10.7 15 10.1 13.8 C9.5 12.5 9.2 10.6 9.2 8.8 C9.2 6 11 3.7 14 3.7 Z"/>
<path d="M5.1 24.1 C5.8 21 8 18.6 12 18.6 L16 18.6 C20 18.6 22.2 21 22.9 24.1 Z"/></g></svg>
<div class="t" style="left:592.10px;top:1195px;font-size:22px;line-height:22px;color:#2b2e35;letter-spacing:-0.200px;">Guest</div>
<div class="t" style="left:1551.40px;top:1195px;font-size:22px;line-height:22px;color:#2b2e35;letter-spacing:0.300px;">User</div>
<div style="position:absolute;left:514px;top:1234px;width:1324px;height:1px;background:#d8d9de"></div>
<svg style="position:absolute;left:533px;top:1251px" width="28" height="28" viewBox="0 0 28 28" fill="none"><g stroke="#6b6f77" stroke-width="1.6" fill="none" stroke-linejoin="round">
<path d="M14 3.7 C17 3.7 18.9 6 18.9 8.8 C18.9 10.6 18.5 12.5 17.9 13.8 C17.3 15 16 15.2 14 15.2 C12 15.2 10.7 15 10.1 13.8 C9.5 12.5 9.2 10.6 9.2 8.8 C9.2 6 11 3.7 14 3.7 Z"/>
<path d="M5.1 24.1 C5.8 21 8 18.6 12 18.6 L16 18.6 C20 18.6 22.2 21 22.9 24.1 Z"/></g></svg>
<div class="t" style="left:592.10px;top:1251px;font-size:22px;line-height:22px;color:#2b2e35;letter-spacing:0.740px;">krbtgt</div>
<div class="t" style="left:1551.40px;top:1251px;font-size:22px;line-height:22px;color:#2b2e35;letter-spacing:0.300px;">User</div>
<div style="position:absolute;left:514px;top:1290px;width:1324px;height:1px;background:#d8d9de"></div>
<svg style="position:absolute;left:533px;top:1307px" width="28" height="28" viewBox="0 0 28 28" fill="none"><g stroke="#6b6f77" stroke-width="1.6" fill="none" stroke-linejoin="round">
<path d="M11.2 3.7 C14.2 3.7 15.8 6 15.8 8.8 C15.8 10.6 15.4 12.5 14.8 13.8 C14.2 15 13 15.2 11.2 15.2 C9.4 15.2 8.2 15 7.6 13.8 C7 12.5 6.6 10.6 6.6 8.8 C6.6 6 8.2 3.7 11.2 3.7 Z"/>
<path d="M16.8 3.8 C19.6 4.3 21.2 6.4 21.2 9 C21.2 11 20.8 12.8 20.2 14 C19.5 15 18.3 15.4 16.8 15.6"/>
<path d="M2.5 24 C3.2 21 5.5 19 10 19 L12.5 19 C17 19 19.2 21 19.9 24 Z"/>
<path d="M20.5 19.2 C23.5 20.3 25.4 22 25.8 24 L22.8 24"/></g></svg>
<div class="t" style="left:591.10px;top:1307px;font-size:22px;line-height:22px;color:#2b2e35;letter-spacing:0.179px;">Protected Users</div>
<div class="t" style="left:1552.40px;top:1307px;font-size:22px;line-height:22px;color:#2b2e35;letter-spacing:-0.275px;">Group</div>
<div style="position:absolute;left:514px;top:1345px;width:1324px;height:1px;background:#d8d9de"></div>
<svg style="position:absolute;left:533px;top:1362px" width="28" height="28" viewBox="0 0 28 28" fill="none"><g stroke="#6b6f77" stroke-width="1.6" fill="none" stroke-linejoin="round">
<path d="M11.2 3.7 C14.2 3.7 15.8 6 15.8 8.8 C15.8 10.6 15.4 12.5 14.8 13.8 C14.2 15 13 15.2 11.2 15.2 C9.4 15.2 8.2 15 7.6 13.8 C7 12.5 6.6 10.6 6.6 8.8 C6.6 6 8.2 3.7 11.2 3.7 Z"/>
<path d="M16.8 3.8 C19.6 4.3 21.2 6.4 21.2 9 C21.2 11 20.8 12.8 20.2 14 C19.5 15 18.3 15.4 16.8 15.6"/>
<path d="M2.5 24 C3.2 21 5.5 19 10 19 L12.5 19 C17 19 19.2 21 19.9 24 Z"/>
<path d="M20.5 19.2 C23.5 20.3 25.4 22 25.8 24 L22.8 24"/></g></svg>
<div class="t" style="left:591.10px;top:1362px;font-size:22px;line-height:22px;color:#2b2e35;letter-spacing:-0.444px;">RAS and IAS Servers</div>
<div class="t" style="left:1552.40px;top:1362px;font-size:22px;line-height:22px;color:#2b2e35;letter-spacing:-0.275px;">Group</div>
<div style="position:absolute;left:514px;top:1400px;width:1324px;height:1px;background:#d8d9de"></div>
<svg style="position:absolute;left:533px;top:1417px" width="28" height="28" viewBox="0 0 28 28" fill="none"><g stroke="#6b6f77" stroke-width="1.6" fill="none" stroke-linejoin="round">
<path d="M11.2 3.7 C14.2 3.7 15.8 6 15.8 8.8 C15.8 10.6 15.4 12.5 14.8 13.8 C14.2 15 13 15.2 11.2 15.2 C9.4 15.2 8.2 15 7.6 13.8 C7 12.5 6.6 10.6 6.6 8.8 C6.6 6 8.2 3.7 11.2 3.7 Z"/>
<path d="M16.8 3.8 C19.6 4.3 21.2 6.4 21.2 9 C21.2 11 20.8 12.8 20.2 14 C19.5 15 18.3 15.4 16.8 15.6"/>
<path d="M2.5 24 C3.2 21 5.5 19 10 19 L12.5 19 C17 19 19.2 21 19.9 24 Z"/>
<path d="M20.5 19.2 C23.5 20.3 25.4 22 25.8 24 L22.8 24"/></g></svg>
<div class="t" style="left:591.10px;top:1417px;font-size:22px;line-height:22px;color:#2b2e35;letter-spacing:-0.007px;">Read-only Domain Controllers</div>
<div class="t" style="left:1552.40px;top:1417px;font-size:22px;line-height:22px;color:#2b2e35;letter-spacing:-0.275px;">Group</div>
<div style="position:absolute;left:514px;top:1455px;width:1324px;height:1px;background:#d8d9de"></div>
<svg style="position:absolute;left:533px;top:1472px" width="28" height="28" viewBox="0 0 28 28" fill="none"><g stroke="#6b6f77" stroke-width="1.6" fill="none" stroke-linejoin="round">
<path d="M11.2 3.7 C14.2 3.7 15.8 6 15.8 8.8 C15.8 10.6 15.4 12.5 14.8 13.8 C14.2 15 13 15.2 11.2 15.2 C9.4 15.2 8.2 15 7.6 13.8 C7 12.5 6.6 10.6 6.6 8.8 C6.6 6 8.2 3.7 11.2 3.7 Z"/>
<path d="M16.8 3.8 C19.6 4.3 21.2 6.4 21.2 9 C21.2 11 20.8 12.8 20.2 14 C19.5 15 18.3 15.4 16.8 15.6"/>
<path d="M2.5 24 C3.2 21 5.5 19 10 19 L12.5 19 C17 19 19.2 21 19.9 24 Z"/>
<path d="M20.5 19.2 C23.5 20.3 25.4 22 25.8 24 L22.8 24"/></g></svg>
<div class="t" style="left:592.10px;top:1472px;font-size:22px;line-height:22px;color:#2b2e35;letter-spacing:-0.075px;">Schema Admins</div>
<div class="t" style="left:1552.40px;top:1472px;font-size:22px;line-height:22px;color:#2b2e35;letter-spacing:-0.275px;">Group</div>
<div style="position:absolute;left:514px;top:1510px;width:1324px;height:1px;background:#d8d9de"></div>
<div style="position:absolute;left:514px;top:1511px;width:1324px;height:55px;background:#edf4fe"></div>
<div style="position:absolute;left:532px;top:1526px;width:24px;height:24px;background:#0067e6;border-radius:6px"></div>
<svg style="position:absolute;left:532px;top:1526px" width="24" height="24" viewBox="0 0 24 24" fill="none"><path d="M5.5 12.2 L10.5 17.1 L19.4 8.1" stroke="#fff" stroke-width="2" fill="none" stroke-linecap="round" stroke-linejoin="round"/></svg>
<div class="t" style="left:591.10px;top:1527px;font-size:22px;line-height:22px;color:#2b2e35;letter-spacing:0.042px;">Иванов Иван Иванович</div>
<div class="t" style="left:1551.40px;top:1527px;font-size:22px;line-height:22px;color:#2b2e35;letter-spacing:0.300px;">User</div>
<div style="position:absolute;left:514px;top:1566px;width:1324px;height:1px;background:#d8d9de"></div>
<div style="position:absolute;left:1874px;top:86px;width:1px;height:1496px;background:#e3e4e9"></div>
<div class="t" style="left:1897.80px;top:121px;font-size:27px;line-height:27px;color:#1f2227;font-weight:700;letter-spacing:-0.526px;">Иванов Иван Иванович</div>
<div style="position:absolute;left:1899px;top:166px;width:96px;height:24px;background:#1f9e4a;border-radius:5px"></div>
<div class="t" style="left:1907.40px;top:169px;font-size:18px;line-height:18px;color:#fff;letter-spacing:1.033px;">Включен</div>
<div class="t" style="left:1898.40px;top:218px;font-size:22px;line-height:22px;color:#767a82;letter-spacing:0.095px;">Имя входа пользователя</div>
<div class="t" style="left:1898.70px;top:248px;font-size:22px;line-height:22px;color:#0c0c0d;letter-spacing:-0.047px;">iiivanov@inno.tech</div>
<div class="t" style="left:1898.40px;top:290px;font-size:22px;line-height:22px;color:#767a82;letter-spacing:0.273px;">Пред-Windows 2000 имя входа</div>
<div class="t" style="left:1898.70px;top:320px;font-size:22px;line-height:22px;color:#0c0c0d;letter-spacing:-0.014px;">iiivanov</div>
<div class="t" style="left:1900.40px;top:362px;font-size:22px;line-height:22px;color:#767a82;letter-spacing:0.337px;">Должность</div>
<div class="t" style="left:1899.70px;top:392px;font-size:22px;line-height:22px;color:#0c0c0d;letter-spacing:0.137px;">Технический писатель</div>
<div class="t" style="left:1899.40px;top:434px;font-size:22px;line-height:22px;color:#767a82;letter-spacing:-0.162px;">Служебный телефон</div>
<div class="t" style="left:1898.70px;top:464px;font-size:22px;line-height:22px;color:#0c0c0d;letter-spacing:1.300px;">+7999888777</div>
<div class="t" style="left:1899.40px;top:505px;font-size:22px;line-height:22px;color:#767a82;letter-spacing:0.025px;">Отдел</div>
<div class="t" style="left:1897.70px;top:535px;font-size:22px;line-height:22px;color:#0c0c0d;letter-spacing:0.400px;">Продуктовой разработки</div>
<div class="t" style="left:1899.40px;top:577px;font-size:22px;line-height:22px;color:#767a82;letter-spacing:-0.037px;">Электронная почта</div>
<div class="t" style="left:1898.70px;top:607px;font-size:22px;line-height:22px;color:#0c0c0d;letter-spacing:-0.173px;">iiivanov@mail.ru</div>
<div class="t" style="left:1898.40px;top:649px;font-size:22px;line-height:22px;color:#767a82;letter-spacing:0.158px;">Выводимое имя</div>
<div class="t" style="left:1897.70px;top:679px;font-size:22px;line-height:22px;color:#0c0c0d;letter-spacing:0.053px;">Иванов Иван Иванович</div>
<div class="t" style="left:1941.00px;top:724px;font-size:22px;line-height:22px;color:#101113;letter-spacing:0.633px;">Открыть</div>
<div class="t" style="left:1941.00px;top:758px;font-size:22px;line-height:22px;color:#101113;letter-spacing:0.214px;">Сбросить пароль</div>
<div class="t" style="left:1940.00px;top:792px;font-size:22px;line-height:22px;color:#101113;letter-spacing:0.460px;">Переместить</div>
<div class="t" style="left:1942.00px;top:825px;font-size:22px;line-height:22px;color:#101113;letter-spacing:0.156px;">Добавить в группу</div>
<div class="t" style="left:1941.00px;top:889px;font-size:22px;line-height:22px;color:#101113;letter-spacing:0.300px;">Удалить</div>
<div class="t" style="left:1941.00px;top:923px;font-size:22px;line-height:22px;color:#101113;letter-spacing:0.525px;">Отключить</div>
<svg style="position:absolute;left:1900px;top:722px" width="26" height="22" viewBox="0 0 26 22" fill="none"><path d="M5.5 11.2 L20.8 11.2 M14.3 4.7 L20.8 11.2 L14.3 17.7" stroke="#0a66e4" stroke-width="1.7" fill="none" stroke-linejoin="round"/></svg>
<svg style="position:absolute;left:1900px;top:756px" width="26" height="24" viewBox="0 0 26 24" fill="none"><path d="M12.4 3.3 A8.1 8.1 0 1 1 7.3 8.9 M3.4 11.5 L6.5 8.1 L9.6 11.5" stroke="#0a66e4" stroke-width="1.7" fill="none" stroke-linecap="round" stroke-linejoin="round"/></svg>
<svg style="position:absolute;left:1900px;top:790px" width="26" height="24" viewBox="0 0 26 24" fill="none"><path d="M5.6 6.2 L21.2 6.2 M9.5 2.3 L5.5 6.2 L9.5 10.1 M6.7 15.6 L22.6 15.6 M18.5 11.5 L22.6 15.6 L18.5 19.7" stroke="#0a66e4" stroke-width="1.7" fill="none" stroke-linecap="round" stroke-linejoin="round"/></svg>
<svg style="position:absolute;left:1898px;top:822px" width="30" height="28" viewBox="0 0 30 28" fill="none"><g stroke="#0a66e4" stroke-width="1.7" fill="none" stroke-linejoin="round">
<path d="M12.7 3 C16.2 3 18 5.5 18 8.6 C18 10.6 17.6 12.6 16.9 14 C16.2 15.2 14.8 15.6 12.7 15.6 C10.6 15.6 9.2 15.2 8.5 14 C7.8 12.6 7.4 10.6 7.4 8.6 C7.4 5.5 9.2 3 12.7 3 Z"/>
<path d="M19.5 3.1 C22.3 3.7 24 5.8 24 8.6 C24 10.8 23.5 12.6 22.8 13.9 C22.2 14.9 21.1 15.4 19.5 15.6"/>
<path d="M3.6 23.6 C4.4 20.4 7 18.1 11.5 18.1 L14.4 18.1 C19 18.1 21.5 20.4 22.2 23.6 Z"/>
<path d="M23.2 18.4 C26.3 19.6 28 21.3 28.4 23.6 L25.3 23.6"/></g></svg>
<svg style="position:absolute;left:1900px;top:884px" width="26" height="28" viewBox="0 0 26 28" fill="none"><g stroke="#0a66e4" stroke-width="1.7" fill="none" stroke-linejoin="round" stroke-linecap="round">
<path d="M3.8 5.4 L23.4 5.4 M13.6 2.6 L13.6 5.4 M5.7 5.8 L6.9 21.6 C7 22.8 7.7 23.6 9 23.6 L18.3 23.6 C19.6 23.6 20.3 22.8 20.4 21.6 L21.5 5.8 M11.2 10.6 L11.2 17.6 M16 10.6 L16 17.6"/></g></svg>
<svg style="position:absolute;left:1900px;top:920px" width="26" height="26" viewBox="0 0 26 26" fill="none"><path d="M8.4 7.2 C5.8 8.9 4.4 11.4 4.4 14.4 C4.4 19 8.4 22.8 13.6 22.8 C18.8 22.8 22.6 19 22.6 14.4 C22.6 11.4 21.2 8.9 18.6 7.2 M13.5 4 L13.5 13.2" stroke="#0a66e4" stroke-width="1.8" fill="none" stroke-linecap="round"/></svg>
<svg style="position:absolute;left:1904px;top:1528px" width="20" height="24" viewBox="0 0 20 24" fill="none"><path d="M6.3 3.8 L15.8 12 L6.3 20.2" stroke="#111" stroke-width="1.7" fill="none"/></svg>
<svg style="position:absolute;left:2360px;top:1521px" width="30" height="30" viewBox="0 0 30 30" fill="none"><path d="M22.70 15.00 L22.70 15.27 L22.71 15.54 L22.91 15.83 L23.27 16.16 L23.72 16.54 L24.14 16.94 L24.46 17.36 L24.58 17.75 L24.51 18.09 L24.40 18.42 L24.27 18.75 L24.14 19.07 L23.99 19.38 L23.83 19.69 L23.66 20.00 L23.48 20.30 L23.29 20.59 L23.09 20.88 L22.88 21.16 L22.66 21.43 L22.43 21.69 L22.17 21.93 L21.77 22.01 L21.26 21.95 L20.69 21.78 L20.14 21.58 L19.67 21.43 L19.32 21.41 L19.08 21.53 L18.85 21.67 L18.61 21.80 L18.39 21.95 L18.23 22.26 L18.13 22.74 L18.03 23.32 L17.89 23.89 L17.69 24.37 L17.41 24.67 L17.08 24.78 L16.74 24.85 L16.39 24.90 L16.05 24.95 L15.70 24.98 L15.35 24.99 L15.00 25.00 L14.65 24.99 L14.30 24.98 L13.95 24.95 L13.61 24.90 L13.26 24.85 L12.92 24.78 L12.59 24.67 L12.31 24.37 L12.11 23.89 L11.97 23.32 L11.87 22.74 L11.77 22.26 L11.61 21.95 L11.39 21.80 L11.15 21.67 L10.92 21.53 L10.68 21.41 L10.33 21.43 L9.86 21.58 L9.31 21.78 L8.74 21.95 L8.23 22.01 L7.83 21.93 L7.57 21.69 L7.34 21.43 L7.12 21.16 L6.91 20.88 L6.71 20.59 L6.52 20.30 L6.34 20.00 L6.17 19.69 L6.01 19.38 L5.86 19.07 L5.73 18.75 L5.60 18.42 L5.49 18.09 L5.42 17.75 L5.54 17.36 L5.86 16.94 L6.28 16.54 L6.73 16.16 L7.09 15.83 L7.29 15.54 L7.30 15.27 L7.30 15.00 L7.30 14.73 L7.29 14.46 L7.09 14.17 L6.73 13.84 L6.28 13.46 L5.86 13.06 L5.54 12.64 L5.42 12.25 L5.49 11.91 L5.60 11.58 L5.73 11.25 L5.86 10.93 L6.01 10.62 L6.17 10.31 L6.34 10.00 L6.52 9.70 L6.71 9.41 L6.91 9.12 L7.12 8.84 L7.34 8.57 L7.57 8.31 L7.83 8.07 L8.23 7.99 L8.74 8.05 L9.31 8.22 L9.86 8.42 L10.33 8.57 L10.68 8.59 L10.92 8.47 L11.15 8.33 L11.39 8.20 L11.61 8.05 L11.77 7.74 L11.87 7.26 L11.97 6.68 L12.11 6.11 L12.31 5.63 L12.59 5.33 L12.92 5.22 L13.26 5.15 L13.61 5.10 L13.95 5.05 L14.30 5.02 L14.65 5.01 L15.00 5.00 L15.35 5.01 L15.70 5.02 L16.05 5.05 L16.39 5.10 L16.74 5.15 L17.08 5.22 L17.41 5.33 L17.69 5.63 L17.89 6.11 L18.03 6.68 L18.13 7.26 L18.23 7.74 L18.39 8.05 L18.61 8.20 L18.85 8.33 L19.08 8.47 L19.32 8.59 L19.67 8.57 L20.14 8.42 L20.69 8.22 L21.26 8.05 L21.77 7.99 L22.17 8.07 L22.43 8.31 L22.66 8.57 L22.88 8.84 L23.09 9.12 L23.29 9.41 L23.48 9.70 L23.66 10.00 L23.83 10.31 L23.99 10.62 L24.14 10.93 L24.27 11.25 L24.40 11.58 L24.51 11.91 L24.58 12.25 L24.46 12.64 L24.14 13.06 L23.72 13.46 L23.27 13.84 L22.91 14.17 L22.71 14.46 L22.70 14.73 Z" stroke="#111" stroke-width="1.7" fill="none" stroke-linejoin="round"/>
<circle cx="15" cy="15" r="4" stroke="#111" stroke-width="1.7" fill="none"/></svg>
</div></body></html>
